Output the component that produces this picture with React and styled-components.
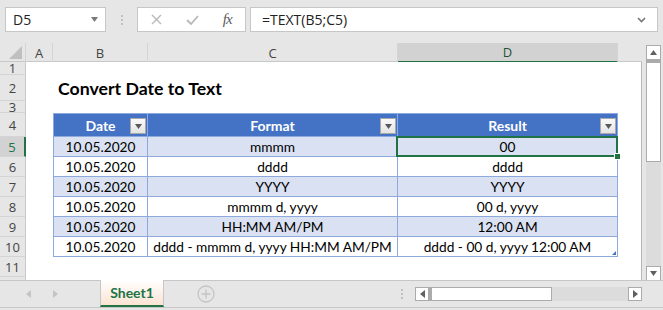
import styled, { createGlobalStyle, css } from 'styled-components'

const GlobalStyle = createGlobalStyle`
  html, body {
    margin: 0;
    padding: 0;
  }
  body {
    width: 663px;
    height: 310px;
    overflow: hidden;
    background: #e6e6e6;
  }
`

const GREEN = '#217346'
const LINE = '#d4d4d4'
const TBL = '#8ea9db'

const Window = styled.div`
  width: 663px;
  height: 310px;
  background: #e6e6e6;
  display: flex;
  flex-direction: column;
  font-family: "Open Sans", "Noto Sans", sans-serif;
  color: #222;
`

/* ---------- formula bar ---------- */

const FormulaBar = styled.div`
  display: flex;
  align-items: center;
  height: 25px;
  margin: 7px 5px 11px 5px;
`

const Box = styled.div`
  height: 25px;
  box-sizing: border-box;
  background: #fff;
  border: 1px solid #c6c6c6;
  display: flex;
  align-items: center;
  width: ${(p) => p.$w}px;
  padding: 0 ${(p) => p.$pad || 0}px;
  margin-left: ${(p) => p.$ml || 0}px;
`

const BoxText = styled.span`
  flex: 1;
  font-size: 14px;
  color: #222;
  white-space: nowrap;
`

const Grip = styled.div`
  width: ${(p) => p.$w || 31}px;
  display: flex;
  flex-direction: column;
  align-items: center;
  gap: 2px;

  & span {
    width: 2px;
    height: 2px;
    background: #c0c0c0;
  }
`

const FxIcon = styled.span`
  font-family: "Liberation Serif", serif;
  font-style: italic;
  font-size: 15px;
  color: #5a5a5a;
  letter-spacing: -1px;
`

const IconSlot = styled.div`
  width: ${(p) => p.$w}px;
  display: flex;
  justify-content: center;
  align-items: center;
`

/* ---------- sheet ---------- */

const SheetArea = styled.div`
  display: flex;
  height: 237px;
`

const Grid = styled.div`
  width: 642px;
  display: flex;
  flex-direction: column;
  overflow: hidden;
`

const GridRow = styled.div`
  display: grid;
  grid-template-columns: 26px 27px 95px 250px 220px 24px;
  height: ${(p) => p.$h}px;
  flex: none;
  background: ${(p) => (p.$header ? '#e6e6e6' : '#fff')};
  ${(p) =>
    p.$header &&
    css`
      border-bottom: 1px solid #c8c8c8;
      box-sizing: border-box;
    `}
`

const Corner = styled.div`
  position: relative;
  border-right: 1px solid ${LINE};
  & svg {
    position: absolute;
    right: 3px;
    bottom: 3px;
  }
`

const ColHead = styled.div`
  display: flex;
  align-items: center;
  justify-content: center;
  font-size: 13px;
  color: #444;
  border-right: 1px solid ${(p) => (p.$last ? 'transparent' : LINE)};
  box-sizing: border-box;
  ${(p) =>
    p.$active &&
    css`
      background: #d2d2d2;
      color: #1d5237;
      border-bottom: 2px solid ${GREEN};
      margin-bottom: -1px;
    `}
`

const RowHead = styled.div`
  display: flex;
  align-items: center;
  justify-content: center;
  font-size: 13px;
  color: #444;
  background: #e6e6e6;
  border-right: 1px solid #c8c8c8;
  border-bottom: 1px solid ${LINE};
  box-sizing: border-box;
  overflow: hidden;
  ${(p) =>
    p.$active &&
    css`
      background: #d2d2d2;
      color: ${GREEN};
      border-right: 2px solid ${GREEN};
    `}
`

const Cell = styled.div`
  box-sizing: border-box;
  ${(p) =>
    p.$edge &&
    css`
      border-right: 1px solid #b6b6b6;
    `}
`

const Title = styled.div`
  grid-column: 3 / 5;
  display: flex;
  align-items: center;
  padding-left: 5px;
  font-family: "Lato", "Open Sans", sans-serif;
  font-weight: 700;
  font-size: 17.7px;
  color: #000;
  white-space: nowrap;
`

const TCell = styled.div`
  position: relative;
  box-sizing: border-box;
  display: flex;
  align-items: center;
  justify-content: center;
  font-family: "Lato", "Open Sans", sans-serif;
  font-size: 13.7px;
  color: #000;
  white-space: nowrap;
  border-right: 1px solid ${TBL};
  border-bottom: 1px solid ${TBL};
  background: ${(p) => (p.$head ? '#4472c4' : p.$band ? '#d9e1f2' : '#fff')};
  ${(p) =>
    p.$first &&
    css`
      border-left: 1px solid ${TBL};
    `}
  ${(p) =>
    p.$head &&
    css`
      border-top: 1px solid ${TBL};
      color: #fff;
      font-weight: 700;
      font-size: 14px;
      padding-top: 1px;
    `}
  ${(p) =>
    p.$selected &&
    css`
      &::after {
        content: '';
        position: absolute;
        left: -2px;
        top: -1px;
        right: -1px;
        bottom: -1px;
        border: 2px solid ${GREEN};
        pointer-events: none;
      }
    `}
`

const FilterBtn = styled.div`
  position: absolute;
  right: 1px;
  bottom: 2px;
  width: 16px;
  height: 16px;
  box-sizing: border-box;
  background: linear-gradient(#fafafa, #e4e4e4);
  border: 1px solid #a9a9a9;
  display: flex;
  align-items: center;
  justify-content: center;
`

const FillHandle = styled.div`
  position: absolute;
  right: -4px;
  bottom: -4px;
  width: 5px;
  height: 5px;
  background: ${GREEN};
  border: 1px solid #fff;
  z-index: 2;
`

const ResizeMark = styled.svg`
  position: absolute;
  right: 1px;
  bottom: 1px;
`

/* ---------- scrollbars ---------- */

const VScroll = styled.div`
  width: 15px;
  margin: 2px 0 0 4px;
  display: flex;
  flex-direction: column;
  height: 236px;
`

const SBtn = styled.div`
  width: 15px;
  height: 15px;
  flex: none;
  box-sizing: border-box;
  background: #fff;
  border: 1px solid #ababab;
  display: flex;
  align-items: center;
  justify-content: center;
`

const VThumb = styled.div`
  height: 102px;
  flex: none;
  box-sizing: border-box;
  background: #fff;
  border: 1px solid #ababab;
  border-top: 3px solid #ababab;
`

const Track = styled.div`
  flex: 1;
  background: #dcdcdc;
`

/* ---------- tab bar ---------- */

const TabBar = styled.div`
  height: 26px;
  display: flex;
  align-items: stretch;
  border-top: 1px solid #c6c6c6;
  border-bottom: 1px solid #c6c6c6;
  background: #e6e6e6;
`

const NavArrows = styled.div`
  width: 100px;
  display: flex;
  align-items: center;
  padding-left: 26px;
  box-sizing: border-box;
  gap: 22px;
`

const SheetTab = styled.div`
  width: 64px;
  box-sizing: border-box;
  margin-top: -1px;
  border-left: 1px solid #c6c6c6;
  border-right: 1px solid #c6c6c6;
  border-bottom: 2px solid ${GREEN};
  background: linear-gradient(#ffffff, #fbe3d3);
  display: flex;
  align-items: center;
  justify-content: center;
  font-family: "Lato", "Open Sans", sans-serif;
  font-weight: 700;
  font-size: 14px;
  color: ${GREEN};
`

const AddSlot = styled.div`
  width: 84px;
  display: flex;
  align-items: center;
  justify-content: center;
`

const Spacer = styled.div`
  flex: 1;
  display: flex;
  align-items: center;
  justify-content: flex-end;
  padding-right: 12px;
`

const HScroll = styled.div`
  width: 227px;
  height: 14px;
  margin: 6px 21px 0 0;
  display: flex;
`

const HThumb = styled.div`
  width: 123px;
  box-sizing: border-box;
  background: #fff;
  border: 1px solid #ababab;
  border-left: 3px solid #ababab;
`

const HBtn = styled(SBtn)`
  width: 14px;
  height: 14px;
`

const Tri = ({ dir = 'down', color = '#777', size = 7 }) => {
  const h = Math.ceil(size / 2) + 1
  const pts = {
    down: `0,0 ${size},0 ${size / 2},${h}`,
    up: `0,${h} ${size},${h} ${size / 2},0`,
    left: `${h},0 ${h},${size} 0,${size / 2}`,
    right: `0,0 0,${size} ${h},${size / 2}`,
  }[dir]
  const vertical = dir === 'down' || dir === 'up'
  return (
    <svg width={vertical ? size : h} height={vertical ? h : size}>
      <polygon points={pts} fill={color} />
    </svg>
  )
}

const rows = [
  ['10.05.2020', 'mmmm', '00'],
  ['10.05.2020', 'dddd', 'dddd'],
  ['10.05.2020', 'YYYY', 'YYYY'],
  ['10.05.2020', 'mmmm d, yyyy', '00 d, yyyy'],
  ['10.05.2020', 'HH:MM AM/PM', '12:00 AM'],
  ['10.05.2020', 'dddd - mmmm d, yyyy HH:MM AM/PM', 'dddd - 00 d, yyyy 12:00 AM'],
]

const Blank = ({ n, h, active }) => (
  <GridRow $h={h}>
    <RowHead $active={active}>{n}</RowHead>
    <Cell />
    <Cell />
    <Cell />
    <Cell />
    <Cell $edge />
  </GridRow>
)

export default function App() {
  return (
    <Window>
      <GlobalStyle />
      <FormulaBar>
        <Box $w={101} $pad={7}>
          <BoxText>D5</BoxText>
          <Tri color="#7a7a7a" />
        </Box>
        <Grip>
          <span />
          <span />
          <span />
        </Grip>
        <Box $w={109}>
          <IconSlot $w={38}>
            <svg width="11" height="11" viewBox="0 0 11 11">
              <path d="M1 1 L10 10 M10 1 L1 10" stroke="#b8b8b8" strokeWidth="1.4" />
            </svg>
          </IconSlot>
          <IconSlot $w={34}>
            <svg width="13" height="10" viewBox="0 0 13 10">
              <path d="M1 5 L5 9 L12 1" stroke="#b8b8b8" strokeWidth="1.8" fill="none" />
            </svg>
          </IconSlot>
          <IconSlot $w={36}>
            <FxIcon>fx</FxIcon>
          </IconSlot>
        </Box>
        <Box $w={408} $pad={11} $ml={4}>
          <BoxText>=TEXT(B5;C5)</BoxText>
          <svg width="9" height="6" viewBox="0 0 9 6">
            <path d="M1 1 L4.5 4.5 L8 1" stroke="#777" strokeWidth="1.6" fill="none" />
          </svg>
        </Box>
      </FormulaBar>

      <SheetArea>
        <Grid>
          <GridRow $h={19} $header>
            <Corner>
              <svg width="13" height="13">
                <polygon points="13,0 13,13 0,13" fill="#bfbfbf" />
              </svg>
            </Corner>
            <ColHead>A</ColHead>
            <ColHead>B</ColHead>
            <ColHead>C</ColHead>
            <ColHead $active>D</ColHead>
            <ColHead $last />
          </GridRow>

          <Blank n={1} h={13} />
          <GridRow $h={26}>
            <RowHead>2</RowHead>
            <Cell />
            <Title>Convert Date to Text</Title>
            <Cell />
            <Cell $edge />
          </GridRow>
          <Blank n={3} h={12} />

          <GridRow $h={24}>
            <RowHead>4</RowHead>
            <Cell />
            <TCell $head $first>
              Date
              <FilterBtn>
                <Tri color="#595959" />
              </FilterBtn>
            </TCell>
            <TCell $head>
              Format
              <FilterBtn>
                <Tri color="#595959" />
              </FilterBtn>
            </TCell>
            <TCell $head>
              Result
              <FilterBtn>
                <Tri color="#595959" />
              </FilterBtn>
            </TCell>
            <Cell $edge />
          </GridRow>

          {rows.map((r, i) => (
            <GridRow $h={20} key={i}>
              <RowHead $active={i === 0}>{i + 5}</RowHead>
              <Cell />
              <TCell $first $band={i % 2 === 0}>
                {r[0]}
              </TCell>
              <TCell $band={i % 2 === 0}>{r[1]}</TCell>
              <TCell $band={i % 2 === 0} $selected={i === 0}>
                {r[2]}
                {i === 0 && <FillHandle />}
                {i === rows.length - 1 && (
                  <ResizeMark width="4" height="4">
                    <polygon points="4,0 4,4 0,4" fill="#4472c4" />
                  </ResizeMark>
                )}
              </TCell>
              <Cell $edge />
            </GridRow>
          ))}

          <Blank n={11} h={20} />
          <Blank n="" h={20} />
        </Grid>

        <VScroll>
          <SBtn>
            <Tri dir="up" color="#606060" />
          </SBtn>
          <VThumb />
          <Track />
          <SBtn>
            <Tri dir="down" color="#606060" />
          </SBtn>
        </VScroll>
      </SheetArea>

      <TabBar>
        <NavArrows>
          <Tri dir="left" color="#c4c4c4" size={8} />
          <Tri dir="right" color="#c4c4c4" size={8} />
        </NavArrows>
        <SheetTab>Sheet1</SheetTab>
        <AddSlot>
          <svg width="18" height="18" viewBox="0 0 18 18">
            <circle cx="9" cy="9" r="8" stroke="#c4c4c4" strokeWidth="1.3" fill="none" />
            <path d="M9 4.5 V13.5 M4.5 9 H13.5" stroke="#c4c4c4" strokeWidth="1.3" />
          </svg>
        </AddSlot>
        <Spacer>
          <Grip $w={2}>
            <span />
            <span />
            <span />
          </Grip>
        </Spacer>
        <HScroll>
          <HBtn>
            <Tri dir="left" color="#606060" size={8} />
          </HBtn>
          <HThumb />
          <Track />
          <HBtn>
            <Tri dir="right" color="#606060" size={8} />
          </HBtn>
        </HScroll>
      </TabBar>
    </Window>
  )
}
